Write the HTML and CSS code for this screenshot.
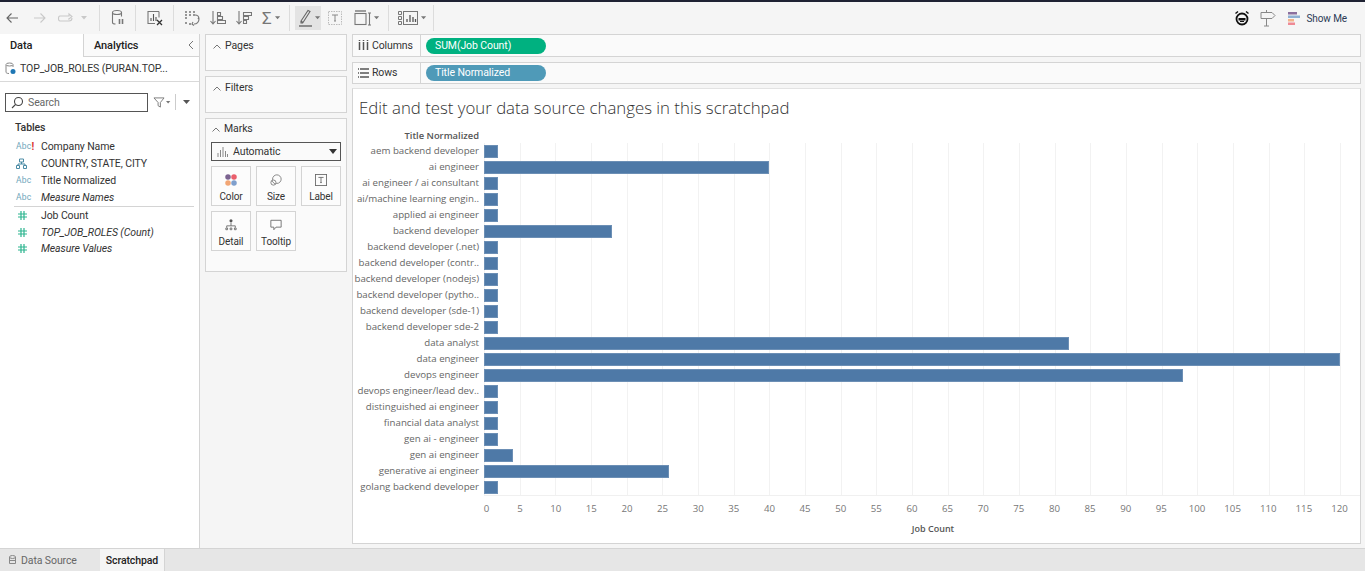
FILE: index.html
```html
<!DOCTYPE html>
<html lang="en">
<head>
    <meta charset="UTF-8">
    <title>Scratchpad</title>
    <link rel="stylesheet" href="styles.css">
</head>
<body>
    <div class="topline"></div>

    <!-- toolbar -->
    <div class="toolbar">
        <div class="tb-group g1">
            <svg class="ic" width="26" height="18" viewBox="0 0 26 18" fill="none" stroke="#666" stroke-width="1.1"><path d="M7 9h11M11.500 4.500 7 9l4.500 4.500"/></svg>
            <svg class="ic" width="26" height="18" viewBox="0 0 26 18" fill="none" stroke="#c9c9c9" stroke-width="1.1"><path d="M8 9h11M14.500 4.500 19 9l-4.500 4.500"/></svg>
            <svg class="ic" width="26" height="18" viewBox="0 0 26 18" fill="none" stroke="#c9c9c9" stroke-width="1.1"><path d="M8 7h9v-2l3 2.500-3 2.500v-1M12 12H8c-2 0-2-5 0-5M12 12h5c1.500 0 3-1 3-3"/></svg>
            <svg class="ic" width="12" height="18" viewBox="0 0 12 18" fill="#c9c9c9"><path d="M3 7h6l-3 3.500z"/></svg>
        </div>
        <div class="tb-group g2">
            <svg width="18" height="20" viewBox="0 0 18 20" fill="none" stroke="#777" stroke-width="1.1"><ellipse cx="8" cy="4.500" rx="4.500" ry="2"/><path d="M3.500 4.500v10c0 1 1.500 1.500 3 1.500M12.500 4.500v4"/><path d="M10.500 11v5M13.500 11v5" stroke-width="1.600"/></svg>
        </div>
        <div class="tb-group g3">
            <svg width="20" height="20" viewBox="0 0 20 20" fill="none" stroke="#777" stroke-width="1.1"><path d="M14 3.500H3v12h7M14 3.500v6"/><path d="M6 13v-3M8.500 13V6M11 13V9" stroke="#555"/><path d="M12 12l5 5M17 12l-5 5" stroke="#333" stroke-width="1.300"/></svg>
        </div>
        <div class="tb-group g4">
            <svg width="16" height="18" viewBox="0 0 16 18" fill="none" stroke="#777" stroke-width="1.1"><path d="M1 3h2M5 3h2M9 3h2M1 6h2M5 6h2M9 6h2M1 9h2M1 14h2M5 15h2" stroke-width="1.600"/><path d="M11 6c3 0 4 2 4 4 0 3-2 5-5 5M9 13l-1 2 2 1.500M15 8l-1 2"/></svg>
            <svg width="16" height="18" viewBox="0 0 16 18" fill="none" stroke="#777" stroke-width="1.1"><path d="M3 2v13M.5 12 3 15l2.500-3"/><path d="M7.500 3.500h3v3h-3zM7.500 7.500h5v3h-5zM7.500 11.500h8v3h-8z"/></svg>
            <svg width="16" height="18" viewBox="0 0 16 18" fill="none" stroke="#777" stroke-width="1.1"><path d="M3 2v13M.5 12 3 15l2.500-3"/><path d="M7.500 3.500h8v3h-8zM7.500 7.500h5v3h-5zM7.500 11.500h3v3h-3z"/></svg>
            <span class="sigma">&Sigma;</span>
            <svg class="caret" width="6" height="4" viewBox="0 0 7 4" fill="#777"><path d="M0 0h6L3 3.500z"/></svg>
        </div>
        <div class="tb-group g5">
            <span class="tb-active">
                <svg width="16" height="20" viewBox="0 0 16 20" fill="none" stroke="#666" stroke-width="1.1"><path d="M3 13 5 14.500 12 3.500 10 2.500zM3 13v2h2"/><path d="M1 18h13" stroke-width="1.400"/></svg>
                <svg class="caret" width="6" height="4" viewBox="0 0 7 4" fill="#777"><path d="M0 0h6L3 3.500z"/></svg>
            </span>
            <svg class="tb-t" width="14" height="14" viewBox="0 0 14 14" fill="none" stroke="#bbb"><rect x=".5" y=".5" width="13" height="13" stroke-dasharray="1.500 1"/><path d="M4 4h6M7 4v6M6 10h2" stroke="#888"/></svg>
            <svg class="tb-box" width="18" height="16" viewBox="0 0 18 16" fill="none" stroke="#777" stroke-width="1.1"><path d="M1 1h11" stroke-width="1.400"/><rect x="1" y="3.500" width="11" height="11"/><path d="M15.500 3v12M14 3h3M14 15h3"/></svg>
            <svg class="caret" width="6" height="4" viewBox="0 0 7 4" fill="#777"><path d="M0 0h6L3 3.500z"/></svg>
        </div>
        <div class="tb-group g6">
            <svg width="20" height="14" viewBox="0 0 20 14" fill="none" stroke="#777" stroke-width="1"><path d="M.5 .5h3v3h-3zM.5 5.500h3v3h-3zM.5 10.500h3v3h-3z"/><rect x="5.500" y=".5" width="14" height="13"/><path d="M9 11V8M12 11V4M15 11V6M17.500 11V8" stroke="#555" stroke-width="1.300"/></svg>
            <svg class="caret" width="6" height="4" viewBox="0 0 7 4" fill="#777"><path d="M0 0h6L3 3.500z"/></svg>
        </div>
        <div class="tb-right">
            <svg width="16" height="16" viewBox="0 0 16 16" fill="none" stroke="#111"><circle cx="8" cy="9" r="5.500" stroke-width="1.800"/><path d="M1.500 3.500l2.500-2M14.500 3.500l-2.500-2" stroke-width="1.500"/><path d="M4.500 8h7v2.500h-7z" fill="#111" stroke="none"/><path d="M6 11.500h4" stroke-width="1"/></svg>
            <svg class="sign" width="16" height="18" viewBox="0 0 16 18" fill="none" stroke="#888"><path d="M1 3.500h11l3 3-3 3H1zM6.500 1v2.500M6.500 9.500V17M4 17h5"/></svg>
            <svg class="showme-ic" width="13" height="13" viewBox="0 0 13 13"><rect x="0" y="0" width="9" height="2.500" fill="#8b6f9e"/><rect x="0" y="3.500" width="12" height="2.500" fill="#8fb0d3"/><rect x="0" y="7" width="6" height="2.500" fill="#f2b38a"/><rect x="0" y="10.500" width="7" height="2.500" fill="#ef8a95"/></svg>
            <span class="showme">Show Me</span>
        </div>
    </div>

    <div class="main">
        <!-- data pane -->
        <div class="sidebar">
            <div class="tabs">
                <div class="tab active">Data</div>
                <div class="tab">Analytics
                    <svg class="collapse" width="6" height="10" viewBox="0 0 6 10" fill="none" stroke="#777"><path d="M5 1 1 5l4 4"/></svg>
                </div>
            </div>
            <div class="source">
                <svg width="11" height="13" viewBox="0 0 11 13" fill="none" stroke="#888"><path d="M1 3v7c0 1 1 1.500 3 1.500M8 3v2"/><ellipse cx="4.500" cy="2.500" rx="3.500" ry="1.500"/><circle cx="8" cy="9.500" r="2.500" fill="#1f77b4" stroke="none"/></svg>
                <span>TOP_JOB_ROLES (PURAN.TOP...</span>
            </div>
            <div class="search-row">
                <div class="search">
                    <svg width="13" height="13" viewBox="0 0 13 13" fill="none" stroke="#444" stroke-width="1.100"><circle cx="7.500" cy="5.500" r="4"/><path d="M4.500 8.500 1 12"/></svg>
                    <span>Search</span>
                </div>
                <svg class="filter-ic" width="12" height="11" viewBox="0 0 13 12" fill="none" stroke="#777"><path d="M1 1h11L8 6v5L5.500 9.500V6z"/></svg>
                <svg class="caret" width="5" height="3" viewBox="0 0 7 4" fill="#777"><path d="M0 0h6L3 3.500z"/></svg>
                <span class="vsep"></span>
                <svg class="caret-big" width="7" height="4" viewBox="0 0 7 4" fill="#555"><path d="M0 0h7L3.500 4z"/></svg>
            </div>
            <div class="tables-title">Tables</div>
            <div class="field"><span class="f-ic abc">Abc<b>!</b></span>Company Name</div>
            <div class="field"><span class="f-ic"><svg width="11" height="11" viewBox="0 0 11 11" fill="none" stroke="#4b8ba5"><path d="M3.500 1h4v3h-4zM.5 7.500h3v3h-3zM7.500 7.500h3v3h-3zM5.500 4v2M2 7.500V6h7v1.500"/></svg></span>COUNTRY, STATE, CITY</div>
            <div class="field"><span class="f-ic abc">Abc</span>Title Normalized</div>
            <div class="field calc"><span class="f-ic abc">Abc</span>Measure Names</div>
            <div class="field-sep"></div>
            <div class="field"><span class="f-ic num"><svg width="9" height="9" viewBox="0 0 9 9" fill="none" stroke="#2cb58f" stroke-width="1.200"><path d="M3 0v9M6 0v9M0 3h9M0 6h9"/></svg></span>Job Count</div>
            <div class="field calc"><span class="f-ic num"><svg width="9" height="9" viewBox="0 0 9 9" fill="none" stroke="#2cb58f" stroke-width="1.200"><path d="M3 0v9M6 0v9M0 3h9M0 6h9"/></svg></span>TOP_JOB_ROLES (Count)</div>
            <div class="field calc"><span class="f-ic num"><svg width="9" height="9" viewBox="0 0 9 9" fill="none" stroke="#2cb58f" stroke-width="1.200"><path d="M3 0v9M6 0v9M0 3h9M0 6h9"/></svg></span>Measure Values</div>
        </div>

        <!-- pages, filters, marks -->
        <div class="cards">
            <div class="card short"><svg class="chev" width="8" height="5" viewBox="0 0 8 5" fill="none" stroke="#777"><path d="M.5 4.500 4 1l3.500 3.500"/></svg>Pages</div>
            <div class="card short"><svg class="chev" width="8" height="5" viewBox="0 0 8 5" fill="none" stroke="#777"><path d="M.5 4.500 4 1l3.500 3.500"/></svg>Filters</div>
            <div class="card marks">
                <div class="marks-title"><svg class="chev" width="8" height="5" viewBox="0 0 8 5" fill="none" stroke="#777"><path d="M.5 4.500 4 1l3.500 3.500"/></svg>Marks</div>
                <div class="mark-select">
                    <svg width="11" height="10" viewBox="0 0 11 10" fill="none" stroke="#888"><path d="M1 10V6M3.500 10V3M6 10V0M8.500 10V4M10.500 10V7"/></svg>
                    <span>Automatic</span>
                    <svg class="sel-caret" width="8" height="5" viewBox="0 0 8 5" fill="#333"><path d="M0 0h8L4 5z"/></svg>
                </div>
                <div class="mark-grid">
                    <div class="mark-btn">
                        <svg width="12" height="12" viewBox="0 0 14 14"><circle cx="3.500" cy="3.500" r="3.200" fill="#7b6390"/><circle cx="10.500" cy="3.500" r="3.200" fill="#ea5f6c"/><circle cx="3.500" cy="10.500" r="3.200" fill="#f2a675"/><circle cx="10.500" cy="10.500" r="3.200" fill="#7f9fcc"/></svg>
                        <span>Color</span>
                    </div>
                    <div class="mark-btn">
                        <svg width="12" height="12" viewBox="0 0 14 14" fill="none" stroke="#777"><circle cx="8" cy="6" r="5"/><circle cx="4" cy="10" r="3" fill="#fafafa"/><path d="M2 8l4 4"/></svg>
                        <span>Size</span>
                    </div>
                    <div class="mark-btn">
                        <svg width="12" height="12" viewBox="0 0 14 14" fill="none" stroke="#666"><rect x=".5" y=".5" width="13" height="13"/><path d="M4 4h6M7 4v6M6 10h2"/></svg>
                        <span>Label</span>
                    </div>
                    <div class="mark-btn">
                        <svg width="12" height="12" viewBox="0 0 14 14" fill="none" stroke="#666"><circle cx="7" cy="2" r="1.800" fill="#555" stroke="none"/><path d="M7 4v4M2 10V8h10v2"/><path d="M1 10.500h2v2H1zM6 10.500h2v2H6zM11 10.500h2v2h-2z"/></svg>
                        <span>Detail</span>
                    </div>
                    <div class="mark-btn">
                        <svg width="12" height="12" viewBox="0 0 14 14" fill="none" stroke="#666"><path d="M1 1.500h12v8H7l-2.500 3v-3H1z"/></svg>
                        <span>Tooltip</span>
                    </div>
                </div>
            </div>
        </div>

        <!-- shelves and view -->
        <div class="workspace">
            <div class="shelf">
                <div class="shelf-label"><svg width="11" height="10" viewBox="0 0 11 10" fill="none" stroke="#555" stroke-width="1.500"><path d="M1.500 2v8M5.500 2v8M9.500 2v8M1.500 0v1M5.500 0v1M9.500 0v1"/></svg>Columns</div>
                <div class="pill green">SUM(Job Count)</div>
            </div>
            <div class="shelf rows">
                <div class="shelf-label"><svg width="11" height="10" viewBox="0 0 11 10" fill="none" stroke="#555" stroke-width="1.300"><path d="M2 1h9M2 5h9M2 9h9M0 1h1M0 5h1M0 9h1"/></svg>Rows</div>
                <div class="pill blue">Title Normalized</div>
            </div>
            <div class="view">
                <div class="view-title">Edit and test your data source changes in this scratchpad</div>
                <div class="chart">
                    <div class="axis-head">Title Normalized</div>
                    <div class="head-space"></div>
                    <div class="labels">
                        <div>aem backend developer</div>
                        <div>ai engineer</div>
                        <div>ai engineer / ai consultant</div>
                        <div>ai/machine learning engin..</div>
                        <div>applied ai engineer</div>
                        <div>backend developer</div>
                        <div>backend developer (.net)</div>
                        <div>backend developer (contr..</div>
                        <div>backend developer (nodejs)</div>
                        <div>backend developer (pytho..</div>
                        <div>backend developer (sde-1)</div>
                        <div>backend developer sde-2</div>
                        <div>data analyst</div>
                        <div>data engineer</div>
                        <div>devops engineer</div>
                        <div>devops engineer/lead dev..</div>
                        <div>distinguished ai engineer</div>
                        <div>financial data analyst</div>
                        <div>gen ai - engineer</div>
                        <div>gen ai engineer</div>
                        <div>generative ai engineer</div>
                        <div>golang backend developer</div>
                    </div>
                    <div class="plot">
                        <div class="bar-row"><div class="bar" style="width:1.67%"></div></div>
                        <div class="bar-row"><div class="bar" style="width:33.33%"></div></div>
                        <div class="bar-row"><div class="bar" style="width:1.67%"></div></div>
                        <div class="bar-row"><div class="bar" style="width:1.67%"></div></div>
                        <div class="bar-row"><div class="bar" style="width:1.67%"></div></div>
                        <div class="bar-row"><div class="bar" style="width:15%"></div></div>
                        <div class="bar-row"><div class="bar" style="width:1.67%"></div></div>
                        <div class="bar-row"><div class="bar" style="width:1.67%"></div></div>
                        <div class="bar-row"><div class="bar" style="width:1.67%"></div></div>
                        <div class="bar-row"><div class="bar" style="width:1.67%"></div></div>
                        <div class="bar-row"><div class="bar" style="width:1.67%"></div></div>
                        <div class="bar-row"><div class="bar" style="width:1.67%"></div></div>
                        <div class="bar-row"><div class="bar" style="width:68.33%"></div></div>
                        <div class="bar-row"><div class="bar" style="width:100%"></div></div>
                        <div class="bar-row"><div class="bar" style="width:81.67%"></div></div>
                        <div class="bar-row"><div class="bar" style="width:1.67%"></div></div>
                        <div class="bar-row"><div class="bar" style="width:1.67%"></div></div>
                        <div class="bar-row"><div class="bar" style="width:1.67%"></div></div>
                        <div class="bar-row"><div class="bar" style="width:1.67%"></div></div>
                        <div class="bar-row"><div class="bar" style="width:3.33%"></div></div>
                        <div class="bar-row"><div class="bar" style="width:21.67%"></div></div>
                        <div class="bar-row"><div class="bar" style="width:1.67%"></div></div>
                    </div>
                    <div class="ticks-wrap">
                        <div class="ticks">
                            <span class="zero">0</span><span>5</span><span>10</span><span>15</span><span>20</span><span>25</span><span>30</span><span>35</span><span>40</span><span>45</span><span>50</span><span>55</span><span>60</span><span>65</span><span>70</span><span>75</span><span>80</span><span>85</span><span>90</span><span>95</span><span>100</span><span>105</span><span>110</span><span>115</span><span>120</span>
                        </div>
                        <div class="axis-title">Job Count</div>
                    </div>
                </div>
            </div>
        </div>
    </div>

    <!-- sheet tabs -->
    <div class="statusbar">
        <div class="sheet source-tab">
            <svg width="7" height="10" viewBox="0 0 7 10" fill="none" stroke="#888"><ellipse cx="3.500" cy="2" rx="3" ry="1.500"/><path d="M.5 2v6.500h6V2M.5 5.500h6"/></svg>
            Data Source
        </div>
        <div class="sheet current">Scratchpad</div>
    </div>
</body>
</html>
```

FILE: styles.css
```css
html, body {
    margin: 0;
    padding: 0;
    height: 100%;
    overflow: hidden;
}

body {
    font-family: "Roboto", "Liberation Sans", sans-serif;
    font-size: 10.5px;
    letter-spacing: -.1px;
    color: #333;
    background-color: #f5f5f5;
    display: flex;
    flex-direction: column;
    height: 571px;
}

.topline {
    height: 2px;
    background-color: #1f2233;
}

/* toolbar */
.toolbar {
    height: 32px;
    display: flex;
    align-items: center;
    flex-shrink: 0;
}

.tb-group {
    height: 26px;
    display: flex;
    align-items: center;
    border-right: 1px solid #dcdcdc;
    box-sizing: border-box;
}

.g1 { width: 100px; }
.g2 { width: 36px; padding-left: 9px; }
.g3 { width: 38px; padding-left: 9px; }
.g4 { width: 116px; padding-left: 10px; gap: 10px; }
.g5 { width: 99px; padding-left: 5px; }
.g6 { width: 45px; padding-left: 9px; gap: 3px; }

.ic { flex-shrink: 0; }

.sigma {
    font-size: 17px;
    color: #777;
    margin-right: -7px;
}

.caret { flex-shrink: 0; }

.tb-active {
    width: 26px;
    height: 24px;
    background-color: #e3e3e3;
    display: flex;
    align-items: center;
    padding-left: 3px;
    box-sizing: border-box;
    gap: 1px;
}

.tb-t { margin-left: 7px; }
.tb-box { margin-left: 12px; margin-right: 2px; }

.tb-right {
    margin-left: auto;
    padding-right: 18px;
    display: flex;
    align-items: center;
}

.sign { margin-left: 10px; }
.showme-ic { margin-left: 12px; }

.showme {
    margin-left: 6px;
    color: #2b3a55;
    font-size: 10px;
}

/* main */
.main {
    flex: 1;
    display: flex;
    min-height: 0;
}

.sidebar {
    width: 200px;
    box-sizing: border-box;
    background-color: #fff;
    border-right: 1px solid #d4d4d4;
    flex-shrink: 0;
}

.tabs {
    display: flex;
    height: 23px;
    background-color: #fafafa;
}

.tab {
    position: relative;
    box-sizing: border-box;
    flex: 1;
    font-weight: 500;
    font-size: 11px;
    color: #222;
    line-height: 23px;
    padding-left: 10px;
    border-bottom: 1px solid #d4d4d4;
    border-left: 1px solid #d4d4d4;
}

.tab.active {
    flex: none;
    width: 83px;
    padding-left: 10px;
    background-color: #fff;
    border-bottom: none;
    border-left: none;
}

.collapse {
    position: absolute;
    right: 5px;
    top: 6px;
}

.source {
    height: 25px;
    box-sizing: border-box;
    display: flex;
    align-items: center;
    gap: 4px;
    padding-left: 5px;
    padding-bottom: 1px;
    border-bottom: 1px solid #d9d9d9;
}

.search-row {
    display: flex;
    align-items: center;
    height: 18px;
    margin-top: 11px;
    padding-left: 5px;
}

.search {
    width: 143px;
    height: 19px;
    box-sizing: border-box;
    border: 1px solid #555;
    display: flex;
    align-items: center;
    gap: 4px;
    padding-left: 5px;
    color: #666;
}

.filter-ic { margin-left: 5px; margin-right: 1px; }

.vsep {
    width: 1px;
    height: 16px;
    background-color: #ccc;
    margin-left: 4px;
}

.caret-big { margin-left: 7px; }

.tables-title {
    font-weight: 500;
    color: #333;
    margin: 10px 0 3px 15px;
    line-height: 14px;
}

.field {
    height: 16.9px;
    line-height: 17px;
    display: flex;
    align-items: center;
    color: #333;
}

.field.calc { font-style: italic; }

.f-ic {
    width: 41px;
    box-sizing: border-box;
    padding-left: 16px;
    flex-shrink: 0;
    font-style: normal;
    display: flex;
    align-items: center;
}

.abc {
    font-size: 8.5px;
    color: #6fa6bb;
    letter-spacing: .2px;
}

.abc b {
    color: #d9332f;
    font-size: 10px;
}

.num { padding-left: 18px; }

.field-sep {
    height: 1px;
    background-color: #d4d4d4;
    margin: .2px 5px 0 14px;
}

/* cards column */
.cards {
    width: 142px;
    margin-left: 5px;
    margin-right: 5px;
    display: flex;
    flex-direction: column;
    gap: 5px;
    flex-shrink: 0;
}

.card {
    box-sizing: border-box;
    border: 1px solid #d4d4d4;
    background-color: #fafafa;
}

.card.short {
    height: 37px;
    padding: 4px 0 0 7px;
    line-height: 14px;
}

.chev { margin-right: 4px; }

.marks {
    height: 154px;
    padding: 0 5px;
}

.marks-title {
    line-height: 14px;
    padding: 3px 0 0 1px;
}

.mark-select {
    margin-top: 6px;
    height: 19px;
    box-sizing: border-box;
    border: 1px solid #555;
    display: flex;
    align-items: center;
    padding: 0 3px 0 5px;
    gap: 5px;
    color: #333;
}

.sel-caret { margin-left: auto; }

.mark-grid {
    display: grid;
    grid-template-columns: repeat(3, 40px);
    grid-auto-rows: 40px;
    gap: 5px;
    margin-top: 5px;
}

.mark-btn {
    box-sizing: border-box;
    border: 1px solid #d4d4d4;
    background-color: #fcfcfc;
    display: flex;
    flex-direction: column;
    align-items: center;
    padding-top: 7px;
    gap: 5px;
    font-size: 10px;
}

/* workspace */
.workspace {
    flex: 1;
    min-width: 0;
    padding-right: 4px;
    display: flex;
    flex-direction: column;
}

.shelf {
    height: 23px;
    box-sizing: border-box;
    border: 1px solid #d4d4d4;
    background-color: #fafafa;
    display: flex;
    align-items: center;
    margin-bottom: 5px;
}

.shelf.rows { height: 22px; margin-bottom: 4px; }

.shelf-label {
    width: 68px;
    height: 100%;
    box-sizing: border-box;
    border-right: 1px solid #d4d4d4;
    display: flex;
    align-items: center;
    gap: 3px;
    padding-left: 5px;
    padding-bottom: 1px;
    flex-shrink: 0;
}

.pill {
    width: 120px;
    height: 16px;
    border-radius: 8px;
    margin-left: 5px;
    color: #fff;
    line-height: 16px;
    padding-left: 9px;
    box-sizing: border-box;
}

.green { background-color: #00b180; }
.blue { background-color: #4f9ab8; }

.view {
    box-sizing: border-box;
    height: 456px;
    border: 1px solid #d4d4d4;
    border-top-color: #e2e2e2;
    background-color: #fff;
    padding-top: 8px;
    padding-left: 6px;
}

.view-title {
    font-family: "Open Sans", sans-serif;
    font-weight: 300;
    font-size: 16.8px;
    letter-spacing: 0;
    line-height: 22px;
    color: #333;
}

.chart {
    margin-left: -6px;
    margin-top: 8px;
    display: grid;
    grid-template-columns: 131px 1fr;
    font-family: "Open Sans", sans-serif;
    font-size: 9.7px;
    letter-spacing: 0;
    color: #666;
}

.axis-head {
    font-weight: 600;
    font-size: 9.4px;
    color: #555;
    text-align: right;
    padding: 2px 5px 0 0;
    line-height: 14px;
    height: 14px;
    white-space: nowrap;
}

.labels div {
    height: 16px;
    line-height: 16px;
    text-align: right;
    padding-right: 5px;
    white-space: nowrap;
}

.plot {
    box-sizing: border-box;
    padding-right: 20px;
    border-bottom: 1px solid #f0f0f0;
    background-image: repeating-linear-gradient(to right, #f2f2f2 0, #f2f2f2 1px, transparent 1px, transparent 35.667px);
}

.bar-row {
    height: 16px;
    display: flex;
    align-items: center;
}

.bar {
    height: 13px;
    background-color: #4e79a7;
    box-sizing: border-box;
    border: 1px solid #6c8fb5;
}

.ticks-wrap {
    grid-column: 2;
    padding-right: 20px;
}

.ticks {
    display: flex;
    justify-content: space-between;
    height: 22px;
    align-items: flex-end;
    font-size: 9.7px;
    color: #777;
}

.ticks span {
    width: 1px;
    display: flex;
    justify-content: center;
    line-height: 16px;
    padding-bottom: 1px;
    position: relative;
}

.ticks .zero { left: 2px; }

.axis-title {
    text-align: center;
    color: #555;
    font-size: 9px;
    font-weight: 600;
    margin-top: 4px;
    margin-left: 42px;
}

/* sheet tabs */
.statusbar {
    height: 23px;
    flex-shrink: 0;
    box-sizing: border-box;
    background-color: #e6e6e6;
    border-top: 1px solid #d4d4d4;
    display: flex;
    padding-left: 9px;
}

.sheet {
    line-height: 21px;
    display: flex;
    align-items: center;
    gap: 5px;
}

.source-tab {
    width: 91px;
    color: #666;
}

.current {
    width: 64px;
    justify-content: center;
    background-color: #f5f5f5;
    border-right: 1px solid #d4d4d4;
    color: #222;
    font-weight: 500;
}
```
